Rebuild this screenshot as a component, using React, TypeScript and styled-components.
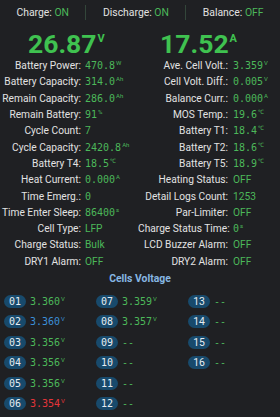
import React from "react";
import styled, { createGlobalStyle, css } from "styled-components";

const GlobalStyle = createGlobalStyle`
  html, body { margin: 0; padding: 0; background: #1f2023; }
  body { font-family: Roboto, "Liberation Sans", sans-serif; }
`;

const Page = styled.div`
  width: 280px;
  height: 417px;
  overflow: hidden;
  background: #1f2023;
  color: #e2e2e2;
`;

const TopBar = styled.div`
  display: flex;
  align-items: center;
  justify-content: space-evenly;
  height: 24px;
  font-size: 10.4px;
`;

const TopItem = styled.div`
  white-space: nowrap;
`;

const Divider = styled.div`
  width: 1px;
  height: 15px;
  background: #33463a;
`;

const On = styled.span`
  color: #4cb85a;
`;

const BigRow = styled.div`
  display: flex;
  justify-content: space-between;
  padding: 5.5px 43px 0 28px;
`;

const BigValue = styled.div`
  font-size: 26.5px;
  line-height: 28px;
  font-weight: 700;
  color: #3fc250;
  white-space: nowrap;
`;

const BigUnit = styled.span`
  display: inline-block;
  vertical-align: top;
  font-size: 11px;
  line-height: 11px;
  margin-top: 3px;
  margin-left: 1px;
`;

const KvGrid = styled.div`
  display: grid;
  grid-template-columns: 81px 57px 90px 1fr;
  grid-auto-rows: 16.3px;
  align-items: center;
`;

const Label = styled.div`
  text-align: right;
  font-size: 10.2px;
  white-space: nowrap;
  color: #e2e2e2;
`;

const Value = styled.div<{ $mono?: boolean; $pad: number }>`
  padding-left: ${(p) => p.$pad}px;
  color: #4cb85a;
  white-space: nowrap;
  ${(p) =>
    p.$mono
      ? css`
          font-family: "DejaVu Sans Mono", "Liberation Mono", monospace;
          font-size: 10px;
        `
      : css`
          font-size: 10.2px;
        `}
`;

const Unit = styled.span`
  font-family: Roboto, "Liberation Sans", sans-serif;
  font-size: 6px;
  position: relative;
  top: -4px;
  margin-left: 1px;
`;

const CellsTitle = styled.div`
  margin-top: 2px;
  height: 16px;
  line-height: 16px;
  text-align: center;
  font-size: 10.4px;
  font-weight: 700;
  color: #86b6e2;
`;

const CellsGrid = styled.div`
  display: grid;
  grid-template-columns: repeat(3, 92px);
  grid-template-rows: repeat(6, 20.4px);
  grid-auto-flow: column;
  padding: 4px 0 0 4px;
`;

const Cell = styled.div`
  display: flex;
  align-items: center;
  gap: 4px;
`;

const Pill = styled.div<{ $mono: boolean }>`
  width: 22px;
  height: 13px;
  border-radius: 7px;
  background: #184a6c;
  color: #e6edf2;
  display: flex;
  align-items: center;
  justify-content: center;
  ${(p) =>
    p.$mono
      ? css`
          font-family: "DejaVu Sans Mono", "Liberation Mono", monospace;
          font-size: 10px;
        `
      : css`
          font-size: 10.4px;
        `}
`;

const CellValue = styled.div<{ $tone: "normal" | "high" | "low" }>`
  font-family: "DejaVu Sans Mono", "Liberation Mono", monospace;
  font-size: 10px;
  color: ${(p) => (p.$tone === "high" ? "#3b8fd8" : p.$tone === "low" ? "#e5353a" : "#4cb85a")};
`;

type Kv = { label: string; value: string; unit?: string; mono?: boolean };

const left: Kv[] = [
  { label: "Battery Power:", value: "470.8", unit: "W", mono: true },
  { label: "Battery Capacity:", value: "314.0", unit: "Ah", mono: true },
  { label: "Remain Capacity:", value: "286.0", unit: "Ah", mono: true },
  { label: "Remain Battery:", value: "91", unit: "%", mono: true },
  { label: "Cycle Count:", value: "7" },
  { label: "Cycle Capacity:", value: "2420.8", unit: "Ah", mono: true },
  { label: "Battery T4:", value: "18.5", unit: "℃", mono: true },
  { label: "Heat Current:", value: "0.000", unit: "A", mono: true },
  { label: "Time Emerg.:", value: "0", mono: true },
  { label: "Time Enter Sleep:", value: "86400", unit: "s", mono: true },
  { label: "Cell Type:", value: "LFP" },
  { label: "Charge Status:", value: "Bulk" },
  { label: "DRY1 Alarm:", value: "OFF" },
];

const right: Kv[] = [
  { label: "Ave. Cell Volt.:", value: "3.359", unit: "V", mono: true },
  { label: "Cell Volt. Diff.:", value: "0.005", unit: "V", mono: true },
  { label: "Balance Curr.:", value: "0.000", unit: "A", mono: true },
  { label: "MOS Temp.:", value: "19.6", unit: "℃", mono: true },
  { label: "Battery T1:", value: "18.4", unit: "℃", mono: true },
  { label: "Battery T2:", value: "18.6", unit: "℃", mono: true },
  { label: "Battery T5:", value: "18.9", unit: "℃", mono: true },
  { label: "Heating Status:", value: "OFF" },
  { label: "Detail Logs Count:", value: "1253" },
  { label: "Par-Limiter:", value: "OFF" },
  { label: "Charge Status Time:", value: "0", unit: "s", mono: true },
  { label: "LCD Buzzer Alarm:", value: "OFF" },
  { label: "DRY2 Alarm:", value: "OFF" },
];

type CellData = { n: string; v?: string; tone?: "normal" | "high" | "low" };
const cells: CellData[] = [
  { n: "01", v: "3.360" },
  { n: "02", v: "3.360", tone: "high" },
  { n: "03", v: "3.356" },
  { n: "04", v: "3.356" },
  { n: "05", v: "3.356" },
  { n: "06", v: "3.354", tone: "low" },
  { n: "07", v: "3.359" },
  { n: "08", v: "3.357" },
  { n: "09" },
  { n: "10" },
  { n: "11" },
  { n: "12" },
  { n: "13" },
  { n: "14" },
  { n: "15" },
  { n: "16" },
];

const KvCells = ({ item, pad }: { item: Kv; pad: number }) => (
  <>
    <Label>{item.label}</Label>
    <Value $mono={item.mono} $pad={pad}>
      {item.value}
      {item.unit && <Unit>{item.unit}</Unit>}
    </Value>
  </>
);

export default function App() {
  return (
    <Page>
      <GlobalStyle />
      <TopBar>
        <TopItem>
          Charge: <On>ON</On>
        </TopItem>
        <Divider />
        <TopItem>
          Discharge: <On>ON</On>
        </TopItem>
        <Divider />
        <TopItem>
          Balance: <On>OFF</On>
        </TopItem>
      </TopBar>
      <BigRow>
        <BigValue>
          26.87<BigUnit>V</BigUnit>
        </BigValue>
        <BigValue>
          17.52<BigUnit>A</BigUnit>
        </BigValue>
      </BigRow>
      <KvGrid>
        {left.map((l, i) => (
          <React.Fragment key={l.label}>
            <KvCells item={l} pad={4} />
            <KvCells item={right[i]} pad={5} />
          </React.Fragment>
        ))}
      </KvGrid>
      <CellsTitle>Cells Voltage</CellsTitle>
      <CellsGrid>
        {cells.map((c) => (
          <Cell key={c.n}>
            <Pill $mono={Number(c.n) <= 12}>{c.n}</Pill>
            <CellValue $tone={c.tone ?? "normal"}>
              {c.v ?? "--"}
              {c.v && <Unit>V</Unit>}
            </CellValue>
          </Cell>
        ))}
      </CellsGrid>
    </Page>
  );
}
